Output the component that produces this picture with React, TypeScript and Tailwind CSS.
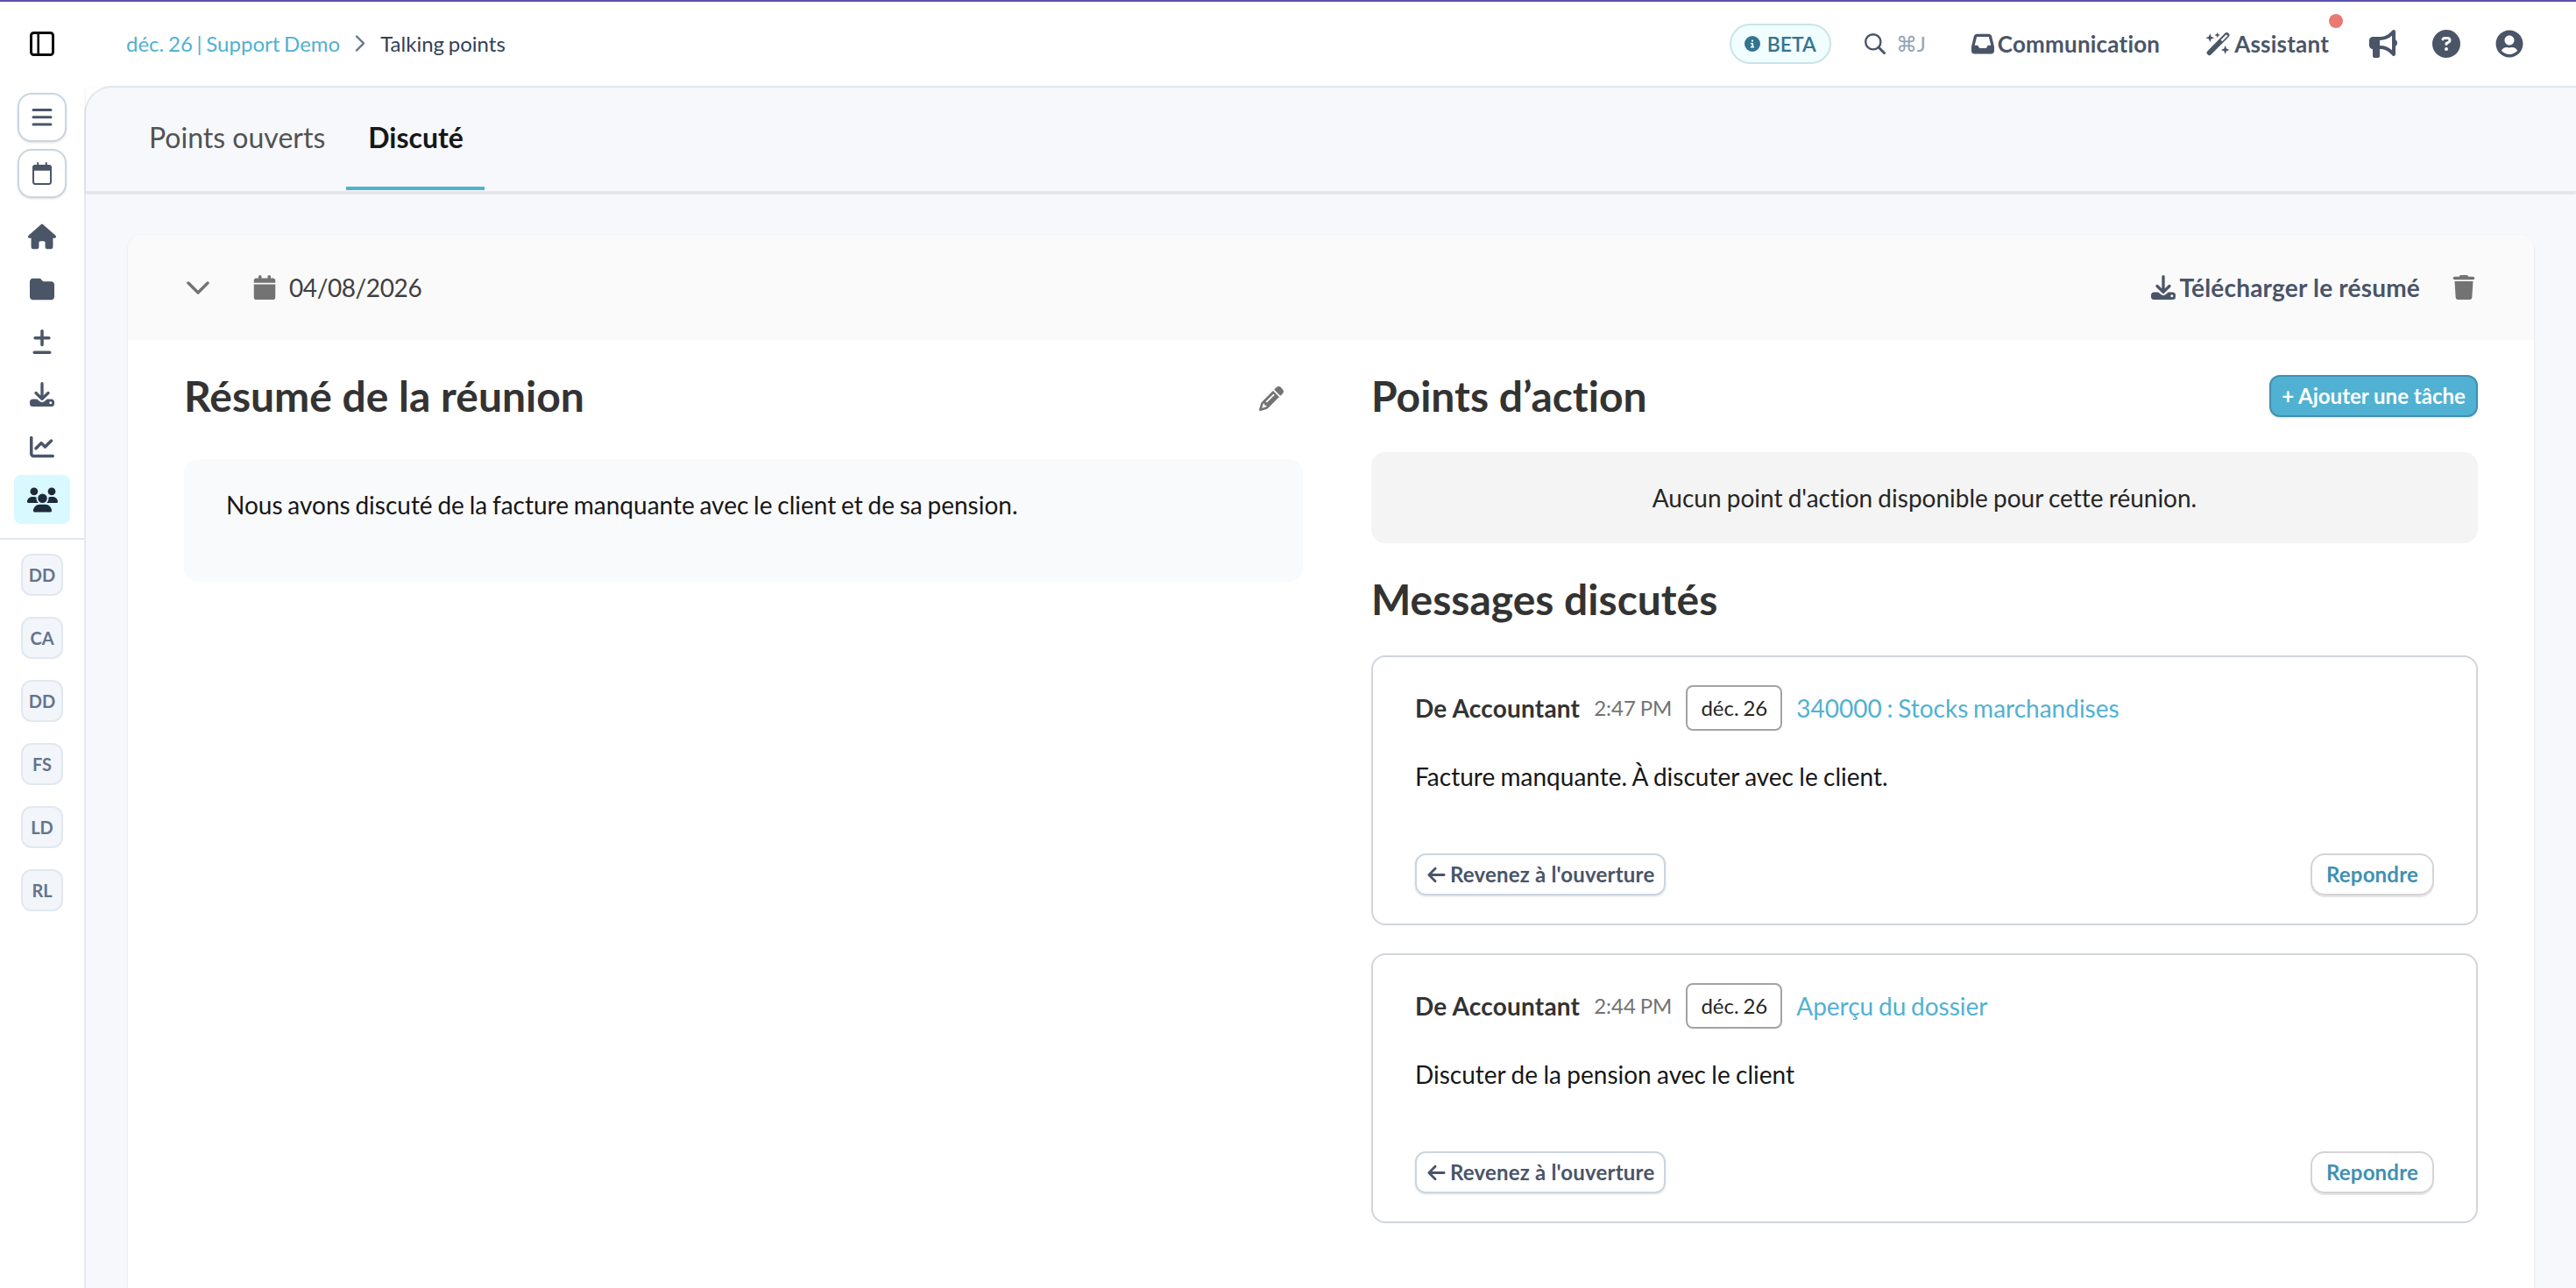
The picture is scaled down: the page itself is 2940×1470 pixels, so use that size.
import React from 'react';
import {
  FaArrowLeft,
  FaBullhorn,
  FaCalendar,
  FaChartLine,
  FaCircleInfo,
  FaCircleQuestion,
  FaFolder,
  FaHouse,
  FaInbox,
  FaPencil,
  FaPlusMinus,
  FaTrash,
  FaUsers,
} from 'react-icons/fa6';
import { FaUserCircle } from 'react-icons/fa';

interface Message {
  id: number;
  author: string;
  time: string;
  period: string;
  link: string;
  text: string;
}

const messages: Message[] = [
  {
    id: 1,
    author: 'De Accountant',
    time: '2:47 PM',
    period: 'déc. 26',
    link: '340000 : Stocks marchandises',
    text: 'Facture manquante. À discuter avec le client.',
  },
  {
    id: 2,
    author: 'De Accountant',
    time: '2:44 PM',
    period: 'déc. 26',
    link: 'Aperçu du dossier',
    text: 'Discuter de la pension avec le client',
  },
];

const shortcuts = ['DD', 'CA', 'DD', 'FS', 'LD', 'RL'];

const bold = 'font-bold tracking-[0.2px] [word-spacing:0px]';
const title = 'text-[48px] font-bold leading-[48px] [word-spacing:0px] text-[#333333]';

function PanelIcon() {
  return (
    <svg width="28" height="28" viewBox="0 0 28 28" fill="none" stroke="#0a0a0a">
      <rect x="1.5" y="1.5" width="25" height="25" rx="3" strokeWidth="3" />
      <path d="M9.7 2v24" strokeWidth="2.6" />
    </svg>
  );
}

function MenuIcon() {
  return (
    <svg width="24" height="22" viewBox="0 0 24 22" fill="none" stroke="currentColor" strokeWidth="3" strokeLinecap="round">
      <path d="M2 2.5h20M2 10.8h20M2 19h20" />
    </svg>
  );
}

function CalendarOutlineIcon() {
  return (
    <svg width="22" height="26" viewBox="0 0 22 26" fill="none" stroke="currentColor">
      <rect x="1" y="4" width="20" height="21" rx="2.5" strokeWidth="2" />
      <path d="M1 9V6q0-2 2-2h16q2 0 2 2v3z" fill="currentColor" strokeWidth="1.5" />
      <path d="M6.2 1v3M15.8 1v3" strokeWidth="2" strokeLinecap="round" />
    </svg>
  );
}

function DriveDownloadIcon({ size = 28 }: { size?: number }) {
  return (
    <svg width={size} height={size} viewBox="0 0 28 28" fill="none" stroke="currentColor">
      <path
        d="M3.5 19.5h4.8l2.9 2.6q2.8 2.200 5.6 0l2.9-2.600h4.8q3.500 0 3.500 3.500v1.500q0 3.500-3.500 3.500h-21Q0 28 0 24.500V23q0-3.500 3.500-3.500zM23.800 22.200a1.500 1.500 0 1 0 .01 0z"
        fill="currentColor"
        fillRule="evenodd"
        stroke="none"
      />
      <path d="M14 1.7v17M7 12.5l7 6.7 7-6.7" strokeWidth="3.3" strokeLinecap="round" strokeLinejoin="round" />
    </svg>
  );
}

function SearchIcon() {
  return (
    <svg width="24" height="24" viewBox="0 0 24 24" fill="none" stroke="currentColor" strokeLinecap="round">
      <circle cx="9.8" cy="9.8" r="8.6" strokeWidth="2.4" />
      <path d="M16.3 16.3l6.2 6.2" strokeWidth="3" />
    </svg>
  );
}

function WandIcon() {
  return (
    <svg width="28" height="28" viewBox="0 0 28 28" fill="currentColor">
      <path
        fillRule="evenodd"
        d="M2.5 22.2L22.3 2.1a3 3 0 0 1 4.2 0 3 3 0 0 1 0 4.2L6.6 26.3a2.9 2.9 0 0 1-4.1-4.1zM17.6 9.6l1.7 1.7 5.6-5.7a1.2 1.2 0 0 0-1.7-1.7z"
      />
      <path d="M5.3 2.3l1.4 3.5 3.5 1.4-3.5 1.4-1.4 3.5-1.4-3.5L.4 7.2l3.5-1.4zM13.7.9l.9 2.2 2.2.9-2.2.9-.9 2.3-.9-2.3-2.3-.9 2.3-.9zM22.7 16l1.4 3.5 3.5 1.4-3.5 1.4-1.4 3.5-1.4-3.5-3.5-1.4 3.5-1.4z" />
    </svg>
  );
}

function Sidebar() {
  const round =
    'flex h-14 w-14 items-center justify-center rounded-[16px] border-2 border-[#cbd5e1] bg-white shadow-sm';
  const item = 'flex h-14 w-16 items-center justify-center rounded-lg';

  return (
    <aside className="flex w-24 shrink-0 flex-col items-center text-[#4a5568]">
      <div className="flex h-24 items-center">
        <PanelIcon />
      </div>
      <div className="mt-2 flex flex-col gap-2">
        <button className={round}>
          <MenuIcon />
        </button>
        <button className={round}>
          <CalendarOutlineIcon />
        </button>
      </div>
      <nav className="mt-4 flex flex-col gap-1">
        <a className={item}><FaHouse size={32} /></a>
        <a className={item}><FaFolder size={28} /></a>
        <a className={item}><FaPlusMinus size={28} /></a>
        <a className={item}><DriveDownloadIcon /></a>
        <a className={item}><FaChartLine size={28} /></a>
        <a className={`${item} bg-[#d8f9ff] text-[#1e293b]`}><FaUsers size={35} /></a>
      </nav>
      <div className="mt-4 flex w-full flex-col items-center gap-6 border-t-2 border-[#e2e8f0] pt-4">
        {shortcuts.map((label, i) => (
          <div
            key={i}
            className="flex h-12 w-12 items-center justify-center rounded-xl border-2 border-[#e2e8f0] bg-[#f2f5fa] text-[20px] font-bold text-[#64748b]"
          >
            {label}
          </div>
        ))}
      </div>
    </aside>
  );
}

function Header() {
  return (
    <header className="flex h-24 shrink-0 items-center justify-between pl-12 pr-[60px] text-[#4a5568]">
      <div className="flex items-center text-[24px]">
        <a className="text-[#51b1d2]">déc. 26 | Support Demo</a>
        <svg className="mx-[17px]" width="12" height="20" viewBox="0 0 12 20" fill="none" stroke="#64748b" strokeWidth="2.4" strokeLinecap="round" strokeLinejoin="round">
          <path d="M2 1.5l8 8-8 8" />
        </svg>
        <span className="text-[#334155]">Talking points</span>
      </div>

      <div className="flex items-center">
        <div className="flex h-[46px] w-[116px] items-center justify-center gap-2 rounded-full border-2 border-[#cbe3ea] bg-[#f0feff] text-[#35738f]">
          <FaCircleInfo size={18} />
          <span className="text-[23px] font-semibold">BETA</span>
        </div>
        <div className="ml-[38px] flex items-center gap-3">
          <SearchIcon />
          <span className="w-[33px] whitespace-nowrap text-[24px] text-[#94a3b8]">⌘J</span>
        </div>
        <div className="ml-[53px] flex items-center gap-1">
          <FaInbox size={26} />
          <span className={`text-[26px] ${bold}`}>Communication</span>
        </div>
        <div className="relative ml-[52px] flex items-center gap-[5px]">
          <WandIcon />
          <span className={`text-[26px] ${bold}`}>Assistant</span>
          <span className="absolute -right-4 -top-[15px] h-4 w-4 rounded-full bg-[#e97973]" />
        </div>
        <div className="ml-[46px] flex items-center gap-10">
          <FaBullhorn size={32} />
          <FaCircleQuestion size={32} />
          <FaUserCircle size={32} />
        </div>
      </div>
    </header>
  );
}

function Tabs() {
  return (
    <div className="flex h-[120px] shrink-0 border-b-2 border-[#e2e8f0] pl-[47px] text-[32px] shadow-sm">
      <button className="h-[117px] pb-1 pl-[25px] pr-6 text-[#525252]">Points ouverts</button>
      <button className="h-[117px] border-b-4 border-[#51b1d2] pl-[25px] pr-6 font-bold text-[#171717]">Discuté</button>
    </div>
  );
}

function MessageCard({ message }: { message: Message }) {
  return (
    <article className="rounded-2xl border-2 border-[#d1d5db] px-12 py-8">
      <div className="flex h-[52px] items-center gap-4">
        <span className={`text-[#333333] ${bold}`}>{message.author}</span>
        <span className="text-[24px] text-[#737373]">{message.time}</span>
        <span className="flex h-[52px] items-center rounded-lg border-2 border-[#a3a3a3] px-[15px] text-[24px] text-[#262626]">
          {message.period}
        </span>
        <a className="text-[#51b1d2]">{message.link}</a>
      </div>
      <p className="mt-8 leading-10 text-[#171717] [word-spacing:-0.8px]">{message.text}</p>
      <div className={`mt-[68px] flex items-center justify-between text-[24px] ${bold}`}>
        <button className="flex h-12 items-center gap-1 rounded-xl border-2 border-[#cbd5e1] px-[11px] text-[#4a5568] shadow-sm">
          <FaArrowLeft size={23} />
          Revenez à l'ouverture
        </button>
        <button className="h-12 rounded-2xl border-2 border-[#d4d4d4] px-4 text-[#3f91b2] shadow-[0_2px_0_#e5e5e5]">
          Repondre
        </button>
      </div>
    </article>
  );
}

export default function App() {
  return (
    <div className="flex h-[1470px] w-[2940px] flex-col overflow-hidden border-t-2 border-[#5b4fb0] bg-white font-['Lato',sans-serif] text-[28px] [font-variant-ligatures:no-common-ligatures] [word-spacing:-1.4px]">
      <div className="flex min-h-0 flex-1">
        <Sidebar />
        <div className="flex min-w-0 flex-1 flex-col">
          <Header />
          <main className="flex min-h-0 flex-1 flex-col rounded-tl-[32px] border-l-2 border-t-2 border-[#e2e8f0] bg-[#f6f8fc]">
            <Tabs />
            <section className="mx-12 mt-12 flex-1 rounded-t-2xl bg-white shadow-sm">
              <div className="flex h-[120px] items-center justify-between rounded-t-2xl bg-[#fafafa] pl-[67px] pr-[66px]">
                <div className="flex items-center">
                  <svg className="mt-0.5" width="26" height="18" viewBox="0 0 26 18" fill="none" stroke="#737373" strokeWidth="3.4" strokeLinecap="round" strokeLinejoin="round">
                    <path d="M2 3l11 11L24 3" />
                  </svg>
                  <FaCalendar size={28} className="ml-[49px] text-[#737373]" />
                  <span className="ml-[14px] tracking-[-0.4px] text-[#404040]">04/08/2026</span>
                </div>
                <div className="flex items-center">
                  <a className={`flex items-center gap-1 text-[#4a5568] ${bold}`}>
                    <DriveDownloadIcon size={28} />
                    Télécharger le résumé
                  </a>
                  <FaTrash size={28} className="ml-9 text-[#737373]" />
                </div>
              </div>

              <div className="flex gap-[78px] px-16 pt-10">
                <div className="w-[1277px]">
                  <div className="flex h-12 items-center justify-between pr-[22px]">
                    <h2 className={title}>Résumé de la réunion</h2>
                    <FaPencil size={28} className="mt-1.5 text-[#737373]" />
                  </div>
                  <div className="mt-12 h-[140px] rounded-2xl bg-[#f9fafc] px-12 pt-8 leading-10 text-[#171717]">
                    Nous avons discuté de la facture manquante avec le client et de sa pension.
                  </div>
                </div>

                <div className="w-[1263px]">
                  <div className="flex h-12 items-center justify-between">
                    <h2 className={title}>Points d’action</h2>
                    <button className="h-12 w-[238px] whitespace-nowrap rounded-xl border-2 border-[#3f91b2] bg-[#51b1d2] text-[24px] font-bold text-white shadow-sm [word-spacing:0px]">
                      + Ajouter une tâche
                    </button>
                  </div>
                  <div className="mt-10 flex h-[104px] items-center justify-center rounded-2xl bg-[#f4f4f4] text-[#262626] [word-spacing:-1px]">
                    Aucun point d'action disponible pour cette réunion.
                  </div>
                  <h2 className={`my-10 ${title}`}>Messages discutés</h2>
                  <div className="flex flex-col gap-8">
                    {messages.map((message) => (
                      <MessageCard key={message.id} message={message} />
                    ))}
                  </div>
                </div>
              </div>
            </section>
          </main>
        </div>
      </div>
    </div>
  );
}
